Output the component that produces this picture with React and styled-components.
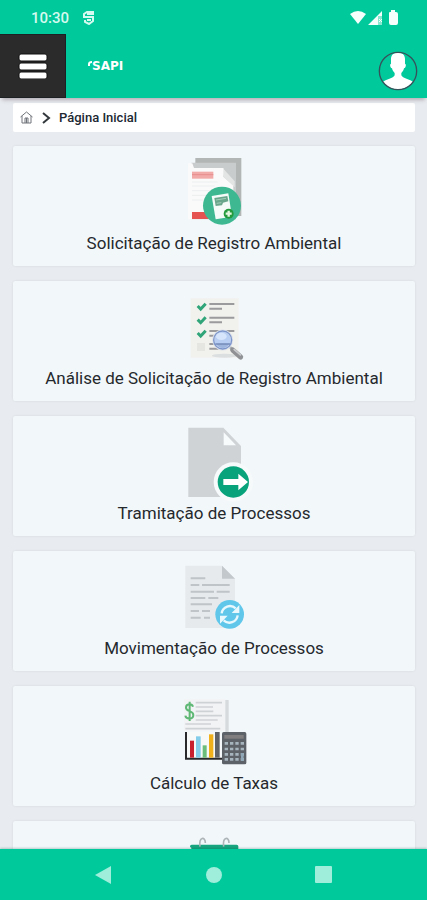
import React from 'react';
import styled, { createGlobalStyle } from 'styled-components';

const GlobalStyle = createGlobalStyle`
    * {
        box-sizing: border-box;
    }

    body {
        margin: 0;
        background: #e8ecf0;
        color: #25292d;
        font-family: Roboto, "Liberation Sans", sans-serif;
    }
`

const Screen = styled.div`
    display: flex;
    flex-direction: column;
    height: 100vh;
    overflow: hidden;
`

const StatusBar = styled.div`
    display: flex;
    align-items: center;
    justify-content: space-between;
    flex: none;
    height: 34px;
    padding: 2px 28px 0 31px;
    background: #00c99c;
    color: #d5faef;
`

const StatusGroup = styled.div`
    display: flex;
    align-items: center;
    gap: ${props => props.$gap};
`

const Clock = styled.span`
    font-size: 15px;
    font-weight: 500;
    line-height: 20px;
`

const Header = styled.header`
    display: flex;
    align-items: center;
    flex: none;
    height: 64px;
    padding-right: 9px;
    background: #00c99c;
    box-shadow: 0 4px 4px -2px rgba(60, 30, 50, 0.3);
    z-index: 1;
`

const MenuButton = styled.button`
    display: flex;
    align-items: center;
    justify-content: center;
    width: 66px;
    height: 64px;
    padding: 0;
    border: 1px solid #1d2022;
    border-left: 0;
    background: #2b2b2b;
`

const Brand = styled.a`
    display: flex;
    align-items: center;
    margin-left: 22px;
    color: #ffffff;
    text-decoration: none;
`

const BrandName = styled.span`
    font-family: "DejaVu Sans", sans-serif;
    font-size: 12px;
    font-weight: 700;
    line-height: 14px;
`

const AvatarButton = styled.button`
    display: flex;
    margin: 10px 0 0 auto;
    padding: 0;
    border: 0;
    border-radius: 50%;
    background: none;
`

const Content = styled.main`
    flex: 1;
    min-height: 0;
    overflow: hidden;
    padding: 5px 12px 0 13px;
`

const Breadcrumb = styled.nav`
    display: flex;
    align-items: center;
    gap: 8px;
    height: 29px;
    padding: 0 7px;
    border-radius: 2px;
    background: #ffffff;
`

const HomeLink = styled.a`
    display: flex;
    color: #70757a;
`

const Current = styled.span`
    color: #202832;
    font-size: 13px;
    font-weight: 500;
    line-height: 18px;
`

const CardList = styled.div`
    display: flex;
    flex-direction: column;
    gap: 15px;
    margin-top: 14px;
`

const Card = styled.a`
    display: flex;
    flex-direction: column;
    align-items: center;
    min-height: 120px;
    padding: 10px 8px 12px;
    border-radius: 2px;
    background: #f2f7fa;
    box-shadow: 0 0 2px rgba(80, 100, 120, 0.15);
    color: inherit;
    text-decoration: none;
`

const CardLabel = styled.span`
    font-size: 17px;
    line-height: 22px;
    text-align: center;
`

const NavBar = styled.nav`
    display: flex;
    align-items: center;
    justify-content: space-between;
    flex: none;
    height: 51px;
    padding: 0 94px;
    background: #00c99c;
    box-shadow: 0 -1px 2px rgba(0, 80, 60, 0.25);
    z-index: 1;
`

const NavButton = styled.button`
    display: flex;
    padding: 0;
    border: 0;
    background: none;
    color: #9eeedb;
`

// every card drawing is on a 240 x 228 grid, shown at a third of that
const Drawing = ({ children }) => (
    <svg width="80" height="76" viewBox="0 0 240 228" aria-hidden="true">
        {children}
    </svg>
)

const RegistroIcon = () => (
    <Drawing>
        <path d="M64 6H202V180H64z" fill="#b2b6b5" />
        <path d="M52 20H186V190H52z" fill="#c9cccc" />
        <path d="M42 22H55L60 36H148L152 46L148 62L178 88V190H42z" fill="#fafafa" />
        <path d="M148 38V62L182 94V76z" fill="#e3e5e5" />
        <path d="M54 47H118V68H54z" fill="#f2aaa9" />
        <path d="M54 56H118" stroke="#e68e8e" strokeWidth="3" />
        <path d="M54 78H130M54 90H122M54 104H110M54 118H100M54 132H94" stroke="#eceeef" strokeWidth="3" />
        <path d="M54 168H104V189H54z" fill="#e65452" />
        <circle cx="144" cy="149" r="57" fill="#3db891" />
        <path d="M113 120L163 112L174 182L125 190z" fill="#f5fbf8" />
        <path d="M121 126L160 120L163 136L147 140L144 148L125 150z" fill="#6aa68b" />
        <path d="M126 132L156 127M128 142L142 140" stroke="#a6cfbb" strokeWidth="3" />
        <circle cx="164" cy="173" r="15" fill="#239b3d" />
        <path d="M164 164V182M155 173H173" stroke="#e4f6df" strokeWidth="7" />
    </Drawing>
)

const AnaliseIcon = () => (
    <Drawing>
        <path d="M50 22H194V200H50z" fill="#f1f1ee" />
        <ellipse cx="152" cy="194" rx="38" ry="6" fill="#dcdfe0" />
        {[38, 79, 119].map(y => (
            <g key={y}>
                <path d={`M71 ${y + 7}L80 ${y + 16}L95 ${y}`} fill="none" stroke="#2fa579" strokeWidth="9" />
                <path d={`M106 ${y + 1}H181M106 ${y + 15}H144`} stroke="#9b9b9d" strokeWidth="6" />
            </g>
        ))}
        <path d="M106 159H170M106 173H134" stroke="#9b9b9d" strokeWidth="6" />
        <path d="M69 156H93V180H69z" fill="#e5e6e2" />
        <path d="M166 166L177 177" stroke="#a9adb2" strokeWidth="8" />
        <path d="M176 177L200 198" stroke="#8f9194" strokeWidth="15" strokeLinecap="round" />
        <path d="M179 174L201 193" stroke="#c8cacc" strokeWidth="5" />
        <circle cx="146" cy="147" r="28" fill="#b8cff3" stroke="#dce1e8" strokeWidth="7" />
        <circle cx="146" cy="147" r="27" fill="none" stroke="#7c95cb" strokeWidth="4" />
        <path d="M127 158H165Q160 170 146 171Q133 170 127 158z" fill="#9db4dc" />
        <path d="M124 159H168" stroke="#6f86b4" strokeWidth="4" />
        <ellipse cx="142" cy="136" rx="16" ry="11" fill="#d6e5fb" />
    </Drawing>
)

const TramitacaoIcon = () => (
    <Drawing>
        <path d="M43 5H148L201 60V213H43z" fill="#d0d3d6" />
        <path d="M149 19L186 58H149z" fill="#f8fbfc" />
        <circle cx="178" cy="168" r="59" fill="#f7fafb" />
        <circle cx="178" cy="168" r="47" fill="#08a27b" />
        <path d="M148 159H193V143L222 168L193 193V177H148z" fill="#ffffff" />
    </Drawing>
)

const MovimentacaoIcon = () => (
    <Drawing>
        <path d="M34 14H144L183 53V201H34z" fill="#e7eaed" />
        <path d="M144 14L183 53H144z" fill="#c3c8cc" />
        <path
            d="M50 52H94M50 72H76M84 72H167M50 92H120M128 92H167M50 111H94M103 111H133M50 130H114M50 150H75M84 150H108M50 170H80M90 170H108"
            stroke="#bfc4c8"
            strokeWidth="6"
        />
        <circle cx="167" cy="160" r="43" fill="#60c7ea" />
        <path d="M143 157A25 25 0 0 1 185 142M191 163A25 25 0 0 1 149 178" fill="none" stroke="#e8f8fd" strokeWidth="7" />
        <path d="M196 132V156H173zM138 188V164H161z" fill="#e8f8fd" />
    </Drawing>
)

const TaxasIcon = () => (
    <Drawing>
        <path d="M30 10H154V104H30z" fill="#f2f3f5" />
        <path d="M154 12H164V108H154z" fill="#d7dadd" />
        <path d="M65 20H144M65 33H117M65 46H118M65 59H144M65 72H131M34 84H111M34 98H139" stroke="#cfd2d5" strokeWidth="5" />
        <path
            d="M57 32C54 22 36 22 36 35C36 48 58 43 58 57C58 71 36 71 34 59M47 17V75"
            fill="none"
            stroke="#5fb875"
            strokeWidth="6"
        />
        <path d="M34 108H140V190H34z" fill="#f7f9f9" />
        <path d="M36 108V188H148" fill="none" stroke="#29292b" strokeWidth="6" />
        <path d="M48 134H60V185H48z" fill="#c8202f" />
        <path d="M66 121H80V185H66z" fill="#83cdea" />
        <path d="M86 148H98V185H86z" fill="#6cbc7a" />
        <path d="M105 115H118V185H105z" fill="#f0b11b" />
        <path d="M123 108H137V185H123z" fill="#606468" />
        <rect x="144" y="108" width="73" height="97" rx="5" fill="#5d6268" />
        <path d="M151 117H209V128H151z" fill="#817e80" />
        {[142, 159, 175, 190].map(y => (
            <path
                key={y}
                d={`M152 ${y}H162M168 ${y}H178M184 ${y}H194M200 ${y}H210`}
                stroke="#a6b4be"
                strokeWidth="8"
            />
        ))}
        <path d="M205 171V195" stroke="#8fa7b6" strokeWidth="8" />
    </Drawing>
)

const CalendarioIcon = () => (
    <Drawing>
        <path d="M52 50Q48 50 48 46Q48 41 53 41H188Q193 41 193 46V210H48z" fill="#17a57f" />
        <path
            d="M78 47C74 16 94 16 94 36M149 47C145 16 165 16 165 36"
            fill="none"
            stroke="#aeb5b8"
            strokeWidth="5"
        />
    </Drawing>
)

const cards = [
    { label: 'Solicitação de Registro Ambiental', Icon: RegistroIcon },
    { label: 'Análise de Solicitação de Registro Ambiental', Icon: AnaliseIcon },
    { label: 'Tramitação de Processos', Icon: TramitacaoIcon },
    { label: 'Movimentação de Processos', Icon: MovimentacaoIcon },
    { label: 'Cálculo de Taxas', Icon: TaxasIcon },
    { Icon: CalendarioIcon },
]

function App() {
    return (
        <Screen>
            <GlobalStyle />
            <StatusBar>
                <StatusGroup $gap="14px">
                    <Clock>10:30</Clock>
                    <svg width="12" height="14" viewBox="0 0 12 14" fill="none" stroke="currentColor" strokeWidth="2">
                        <path d="M10 4V1H4L1 3V6H10V10L6 13L2 11V9M4 3H10M4 9H8" />
                    </svg>
                </StatusGroup>
                <StatusGroup $gap="0">
                    <svg width="50" height="16" viewBox="0 0 50 16" fill="#f5fffc">
                        <path d="M1 4Q9 -2 17 4L9 14z" />
                        <path d="M19 15L33 1V6H29V15z" />
                        <path d="M29 6H33V15H29z" fill="#8be8d0" />
                        <path d="M30 9L33 12M33 9L30 12" stroke="#ffffff" />
                        <path d="M40 3Q40 2 41 2H42V0H46V2H47Q49 2 49 4V13Q49 15 47 15H42Q40 15 40 13z" />
                    </svg>
                </StatusGroup>
            </StatusBar>

            <Header>
                <MenuButton aria-label="Menu">
                    <svg width="30" height="26" viewBox="0 0 30 26" fill="#ffffff" stroke="#111111">
                        <rect x="1" y="1" width="28" height="7" rx="2" />
                        <rect x="1" y="10" width="28" height="7" rx="2" />
                        <rect x="1" y="19" width="28" height="7" rx="2" />
                    </svg>
                </MenuButton>
                <Brand href="#">
                    <svg width="4" height="10" viewBox="0 0 4 10" fill="none" stroke="currentColor" strokeWidth="2">
                        <path d="M1 5V3Q1 1 4 1" />
                    </svg>
                    <BrandName>SAPI</BrandName>
                </Brand>
                <AvatarButton aria-label="Perfil">
                    <svg width="40" height="40" viewBox="0 0 120 120">
                        <defs>
                            <clipPath id="avatar">
                                <circle cx="60" cy="60" r="55" />
                            </clipPath>
                        </defs>
                        <path
                            clipPath="url(#avatar)"
                            fill="#ffffff"
                            d="M60 5C44 5 38 14 39 28L39 38C34 40 37 51 42 52C43 59 47 63 50 66V73C46 82 25 84 12 95V120H108V95C95 84 74 82 70 73V66C73 63 77 59 78 52C83 51 86 40 81 38V28C82 14 76 5 60 5z"
                        />
                        <circle cx="60" cy="60" r="56" fill="none" stroke="#37515a" strokeWidth="4" />
                    </svg>
                </AvatarButton>
            </Header>

            <Content>
                <Breadcrumb>
                    <HomeLink href="#" aria-label="Página Inicial">
                        <svg width="13" height="13" viewBox="0 0 13 13" fill="none" stroke="currentColor">
                            <path d="M0.500 6L6.500 1L12.500 6M2 5V12H11V5M5 12V7H8V12M6.500 7V12" />
                        </svg>
                    </HomeLink>
                    <svg width="10" height="12" viewBox="0 0 10 12" fill="none" stroke="#33383d" strokeWidth="2">
                        <path d="M2 1L8 6L2 11" />
                    </svg>
                    <Current>Página Inicial</Current>
                </Breadcrumb>
                <CardList>
                    {cards.map(({ label, Icon }, idx) => (
                        <Card key={idx} href="#">
                            <Icon />
                            {label && <CardLabel>{label}</CardLabel>}
                        </Card>
                    ))}
                </CardList>
            </Content>

            <NavBar>
                <NavButton aria-label="Voltar">
                    <svg width="18" height="18" viewBox="0 0 18 18" fill="currentColor">
                        <path d="M1 9L17 0V18z" />
                    </svg>
                </NavButton>
                <NavButton aria-label="Início">
                    <svg width="18" height="18" viewBox="0 0 18 18" fill="currentColor">
                        <circle cx="9" cy="9" r="8" />
                    </svg>
                </NavButton>
                <NavButton aria-label="Recentes">
                    <svg width="18" height="18" viewBox="0 0 18 18" fill="currentColor">
                        <rect x="0" y="0" width="17" height="17" rx="1" />
                    </svg>
                </NavButton>
            </NavBar>
        </Screen>
    )
}

export default App;
